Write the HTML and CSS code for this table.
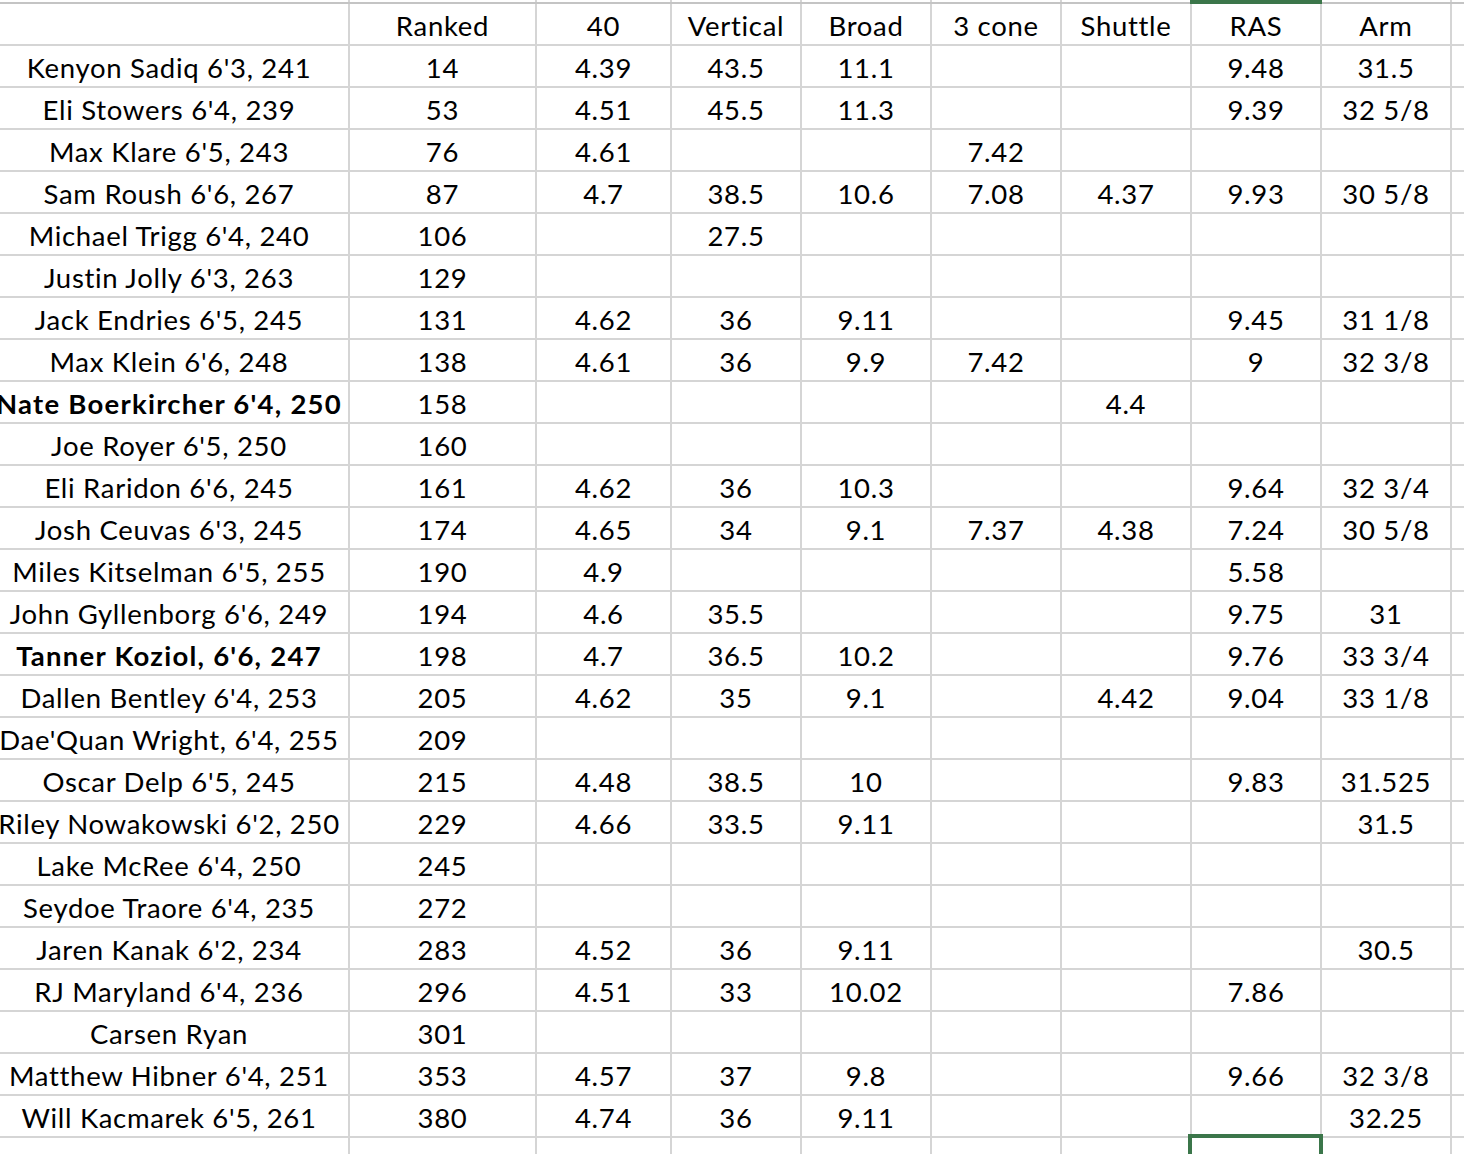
FILE: index.html
```html
<!DOCTYPE html>
<html>
<head>
<meta charset="utf-8">
<link rel="stylesheet" href="styles.css">
</head>
<body>
<div class="sheet">
  <div class="row strip">
    <div class="c"></div><div class="c"></div><div class="c"></div><div class="c"></div><div class="c"></div><div class="c"></div><div class="c"></div><div class="c sel-col"><span class="col-mark"></span></div><div class="c"></div><div class="c"></div>
  </div>
  <div class="row head">
    <div class="c"></div><div class="c">Ranked</div><div class="c">40</div><div class="c">Vertical</div><div class="c">Broad</div><div class="c">3 cone</div><div class="c">Shuttle</div><div class="c">RAS</div><div class="c">Arm</div><div class="c"></div>
  </div>
  <div class="row"><div class="c">Kenyon Sadiq 6'3, 241</div><div class="c">14</div><div class="c">4.39</div><div class="c">43.5</div><div class="c">11.1</div><div class="c"></div><div class="c"></div><div class="c">9.48</div><div class="c">31.5</div><div class="c"></div></div>
  <div class="row"><div class="c">Eli Stowers 6'4, 239</div><div class="c">53</div><div class="c">4.51</div><div class="c">45.5</div><div class="c">11.3</div><div class="c"></div><div class="c"></div><div class="c">9.39</div><div class="c">32 5/8</div><div class="c"></div></div>
  <div class="row"><div class="c">Max Klare 6'5, 243</div><div class="c">76</div><div class="c">4.61</div><div class="c"></div><div class="c"></div><div class="c">7.42</div><div class="c"></div><div class="c"></div><div class="c"></div><div class="c"></div></div>
  <div class="row"><div class="c">Sam Roush 6'6, 267</div><div class="c">87</div><div class="c">4.7</div><div class="c">38.5</div><div class="c">10.6</div><div class="c">7.08</div><div class="c">4.37</div><div class="c">9.93</div><div class="c">30 5/8</div><div class="c"></div></div>
  <div class="row"><div class="c">Michael Trigg 6'4, 240</div><div class="c">106</div><div class="c"></div><div class="c">27.5</div><div class="c"></div><div class="c"></div><div class="c"></div><div class="c"></div><div class="c"></div><div class="c"></div></div>
  <div class="row"><div class="c">Justin Jolly 6'3, 263</div><div class="c">129</div><div class="c"></div><div class="c"></div><div class="c"></div><div class="c"></div><div class="c"></div><div class="c"></div><div class="c"></div><div class="c"></div></div>
  <div class="row"><div class="c">Jack Endries 6'5, 245</div><div class="c">131</div><div class="c">4.62</div><div class="c">36</div><div class="c">9.11</div><div class="c"></div><div class="c"></div><div class="c">9.45</div><div class="c">31 1/8</div><div class="c"></div></div>
  <div class="row"><div class="c">Max Klein 6'6, 248</div><div class="c">138</div><div class="c">4.61</div><div class="c">36</div><div class="c">9.9</div><div class="c">7.42</div><div class="c"></div><div class="c">9</div><div class="c">32 3/8</div><div class="c"></div></div>
  <div class="row"><div class="c b">Nate Boerkircher 6'4, 250</div><div class="c">158</div><div class="c"></div><div class="c"></div><div class="c"></div><div class="c"></div><div class="c">4.4</div><div class="c"></div><div class="c"></div><div class="c"></div></div>
  <div class="row"><div class="c">Joe Royer 6'5, 250</div><div class="c">160</div><div class="c"></div><div class="c"></div><div class="c"></div><div class="c"></div><div class="c"></div><div class="c"></div><div class="c"></div><div class="c"></div></div>
  <div class="row"><div class="c">Eli Raridon 6'6, 245</div><div class="c">161</div><div class="c">4.62</div><div class="c">36</div><div class="c">10.3</div><div class="c"></div><div class="c"></div><div class="c">9.64</div><div class="c">32 3/4</div><div class="c"></div></div>
  <div class="row"><div class="c">Josh Ceuvas 6'3, 245</div><div class="c">174</div><div class="c">4.65</div><div class="c">34</div><div class="c">9.1</div><div class="c">7.37</div><div class="c">4.38</div><div class="c">7.24</div><div class="c">30 5/8</div><div class="c"></div></div>
  <div class="row"><div class="c">Miles Kitselman 6'5, 255</div><div class="c">190</div><div class="c">4.9</div><div class="c"></div><div class="c"></div><div class="c"></div><div class="c"></div><div class="c">5.58</div><div class="c"></div><div class="c"></div></div>
  <div class="row"><div class="c">John Gyllenborg 6'6, 249</div><div class="c">194</div><div class="c">4.6</div><div class="c">35.5</div><div class="c"></div><div class="c"></div><div class="c"></div><div class="c">9.75</div><div class="c">31</div><div class="c"></div></div>
  <div class="row"><div class="c b">Tanner Koziol, 6'6, 247</div><div class="c">198</div><div class="c">4.7</div><div class="c">36.5</div><div class="c">10.2</div><div class="c"></div><div class="c"></div><div class="c">9.76</div><div class="c">33 3/4</div><div class="c"></div></div>
  <div class="row"><div class="c">Dallen Bentley 6'4, 253</div><div class="c">205</div><div class="c">4.62</div><div class="c">35</div><div class="c">9.1</div><div class="c"></div><div class="c">4.42</div><div class="c">9.04</div><div class="c">33 1/8</div><div class="c"></div></div>
  <div class="row"><div class="c">Dae'Quan Wright, 6'4, 255</div><div class="c">209</div><div class="c"></div><div class="c"></div><div class="c"></div><div class="c"></div><div class="c"></div><div class="c"></div><div class="c"></div><div class="c"></div></div>
  <div class="row"><div class="c">Oscar Delp 6'5, 245</div><div class="c">215</div><div class="c">4.48</div><div class="c">38.5</div><div class="c">10</div><div class="c"></div><div class="c"></div><div class="c">9.83</div><div class="c">31.525</div><div class="c"></div></div>
  <div class="row"><div class="c">Riley Nowakowski 6'2, 250</div><div class="c">229</div><div class="c">4.66</div><div class="c">33.5</div><div class="c">9.11</div><div class="c"></div><div class="c"></div><div class="c"></div><div class="c">31.5</div><div class="c"></div></div>
  <div class="row"><div class="c">Lake McRee 6'4, 250</div><div class="c">245</div><div class="c"></div><div class="c"></div><div class="c"></div><div class="c"></div><div class="c"></div><div class="c"></div><div class="c"></div><div class="c"></div></div>
  <div class="row"><div class="c">Seydoe Traore 6'4, 235</div><div class="c">272</div><div class="c"></div><div class="c"></div><div class="c"></div><div class="c"></div><div class="c"></div><div class="c"></div><div class="c"></div><div class="c"></div></div>
  <div class="row"><div class="c">Jaren Kanak 6'2, 234</div><div class="c">283</div><div class="c">4.52</div><div class="c">36</div><div class="c">9.11</div><div class="c"></div><div class="c"></div><div class="c"></div><div class="c">30.5</div><div class="c"></div></div>
  <div class="row"><div class="c">RJ Maryland 6'4, 236</div><div class="c">296</div><div class="c">4.51</div><div class="c">33</div><div class="c">10.02</div><div class="c"></div><div class="c"></div><div class="c">7.86</div><div class="c"></div><div class="c"></div></div>
  <div class="row"><div class="c">Carsen Ryan</div><div class="c">301</div><div class="c"></div><div class="c"></div><div class="c"></div><div class="c"></div><div class="c"></div><div class="c"></div><div class="c"></div><div class="c"></div></div>
  <div class="row"><div class="c">Matthew Hibner 6'4, 251</div><div class="c">353</div><div class="c">4.57</div><div class="c">37</div><div class="c">9.8</div><div class="c"></div><div class="c"></div><div class="c">9.66</div><div class="c">32 3/8</div><div class="c"></div></div>
  <div class="row"><div class="c">Will Kacmarek 6'5, 261</div><div class="c">380</div><div class="c">4.74</div><div class="c">36</div><div class="c">9.11</div><div class="c"></div><div class="c"></div><div class="c"></div><div class="c">32.25</div><div class="c"></div></div>
  <div class="row"><div class="c"></div><div class="c"></div><div class="c"></div><div class="c"></div><div class="c"></div><div class="c"></div><div class="c"></div><div class="c sel-cell"><span class="cursor"></span></div><div class="c"></div><div class="c"></div></div>
</div>
</body>
</html>
```
FILE: styles.css
```css
html, body {
  margin: 0;
  padding: 0;
  background: #ffffff;
  overflow: hidden;
}
body {
  width: 1464px;
  height: 1154px;
  font-family: "Lato", "Liberation Sans", sans-serif;
  font-size: 27.5px;
  letter-spacing: 0.7px;
  color: #000000;
}
.sheet {
  margin-left: -10px;
  width: 1480px;
}
.row {
  display: grid;
  grid-template-columns: 360px 187px 135px 130px 130px 130px 130px 130px 130px 98px;
  height: 42px;
  box-sizing: border-box;
  border-bottom: 2px solid #d5d5d5;
}
.row.strip {
  height: 4px;
  border-bottom: 2px solid #c4c4c4;
}
.c {
  box-sizing: border-box;
  border-right: 2px solid #d5d5d5;
  display: flex;
  align-items: flex-end;
  justify-content: center;
  padding-bottom: 5px;
  overflow: hidden;
  white-space: nowrap;
  line-height: 1;
}
.row.strip .c {
  padding: 0;
}
.b {
  font-weight: 700;
  letter-spacing: 1.25px;
}
.sel-col, .sel-cell {
  position: relative;
  overflow: visible;
}
.col-mark {
  position: absolute;
  left: -2px;
  top: 0;
  width: 132px;
  height: 6px;
  background: #3b764a;
  margin-top: -2px;
}
.cursor {
  position: absolute;
  left: -4px;
  top: -4px;
  width: 135px;
  height: 40px;
  box-sizing: border-box;
  border: 4px solid #3b764a;
}
```
